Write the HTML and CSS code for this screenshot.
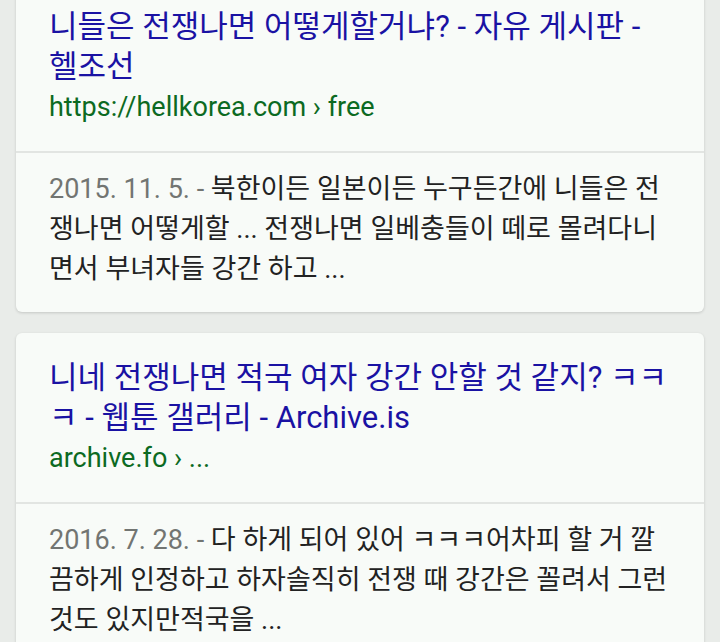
FILE: index.html
```html
<!DOCTYPE html>
<html lang="ko">
<head>
<meta charset="utf-8">
<title>검색 결과</title>
<link rel="stylesheet" href="styles.css">
</head>
<body>
<main class="results">
  <article class="card">
    <div class="card-head">
      <a class="title" href="#">니들은 전쟁나면 어떻게할거냐? - 자유 게시판 - 헬조선</a>
      <div class="url">https://hellkorea.com › free</div>
    </div>
    <div class="card-body">
      <p class="snippet"><span class="date">2015. 11. 5. - </span>북한이든 일본이든 누구든간에 니들은 전쟁나면 어떻게할 ... 전쟁나면 일베충들이 떼로 몰려다니면서 부녀자들 강간 하고 ...</p>
    </div>
  </article>
  <article class="card">
    <div class="card-head">
      <a class="title" href="#">니네 전쟁나면 적국 여자 강간 안할 것 같지? ㅋㅋㅋ - 웹툰 갤러리 - Archive.is</a>
      <div class="url">archive.fo › ...</div>
    </div>
    <div class="card-body">
      <p class="snippet"><span class="date">2016. 7. 28. - </span>다 하게 되어 있어 ㅋㅋㅋ어차피 할 거 깔끔하게 인정하고 하자솔직히 전쟁 때 강간은 꼴려서 그런 것도 있지만적국을 ...</p>
    </div>
  </article>
</main>
</body>
</html>
```

FILE: styles.css
```css
html, body {
  margin: 0;
  padding: 0;
  background: #e9ece9;
}

body {
  font-family: Roboto, "Noto Sans CJK KR", sans-serif;
  width: 720px;
  height: 642px;
  overflow: hidden;
}

.results {
  display: flex;
  flex-direction: column;
  gap: 21px;
  padding: 0 16px;
  margin-top: -18px;
}

.card {
  background: #f8fbf8;
  border-radius: 6px;
  box-shadow: 0 1px 3px rgba(0, 0, 0, 0.16);
}

.card-head {
  padding: 25px 33px 24px 33px;
  border-bottom: 2px solid #e2e5e2;
}

.title {
  display: block;
  color: #1a12a3;
  text-decoration: none;
  font-size: 31px;
  line-height: 40px;
}

.url {
  color: #0c6a22;
  font-size: 27px;
  line-height: 40px;
}

.card-body {
  padding: 16px 33px 23px 33px;
}

.snippet {
  margin: 0;
  color: #222222;
  font-size: 27px;
  line-height: 40px;
}

.date {
  color: #727572;
}
```
